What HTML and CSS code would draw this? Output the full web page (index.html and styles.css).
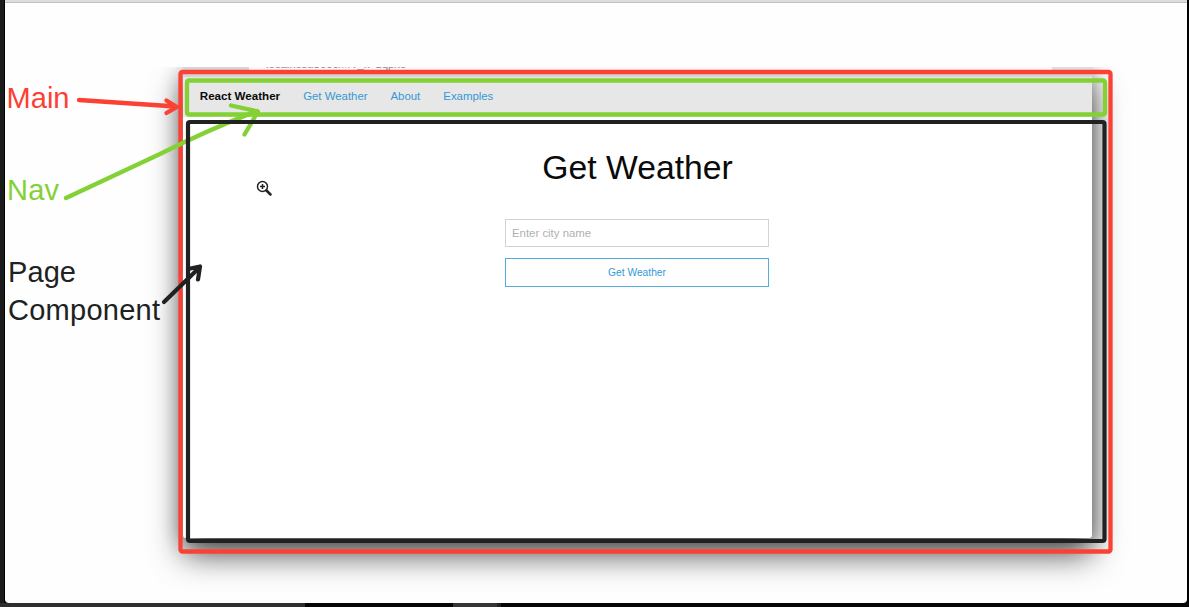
FILE: index.html
```html
<!DOCTYPE html>
<html lang="en">
<head>
<meta charset="utf-8">
<title>React Weather</title>
<link rel="stylesheet" href="styles.css">
</head>
<body>
<main class="slide">
  <div class="stage">
    <section class="browser">
      <div class="toolbar"><span class="tool-icons"></span><span class="url">localhost:3000/#/?_k=zqpxc</span><span class="tool-end"></span></div>
      <nav class="nav">
        <strong class="brand">React Weather</strong>
        <a class="link">Get Weather</a>
        <a class="link">About</a>
        <a class="link">Examples</a>
      </nav>
      <div class="page">
        <h1 class="title">Get Weather</h1>
        <form class="form">
          <input class="field" type="text" placeholder="Enter city name">
          <button class="button" type="button">Get Weather</button>
        </form>
      </div>
    </section>
  </div>
</main>
<footer class="strip"><span class="strip-dark"></span><span class="strip-thumb"></span></footer>
<svg class="notes" width="1189" height="607" viewBox="0 0 1189 607">
  <g class="stroke red">
    <rect x="180.5" y="72" width="930" height="479.5" rx="2"/>
    <path d="M79 100 176 106.5M166.500 100.500 177 107 166.500 113"/>
  </g>
  <g class="stroke green">
    <rect x="187" y="80.500" width="918" height="34" rx="2"/>
    <path d="M66 198 160 154Q210 129 257 111M231 105.500 258 111.500 244.500 134.500"/>
  </g>
  <g class="stroke black">
    <rect x="188" y="122" width="916.500" height="419" rx="2"/>
    <path d="M164 302 200 267M188 269 200 266.500 198 279.500"/>
  </g>
  <g class="labels">
    <text class="red-text" x="6.500" y="108" textLength="63">Main</text>
    <text class="green-text" x="7" y="200" textLength="52">Nav</text>
    <text x="8" y="282" textLength="68">Page</text>
    <text x="8" y="320" textLength="152">Component</text>
  </g>
  <g class="cursor">
    <circle class="lens" cx="262.500" cy="186.500" r="5"/>
    <path d="M262.500 184V189M260 186.500H265"/>
    <path class="handle" d="M266.500 190.500 270.500 194.500"/>
  </g>
</svg>
</body>
</html>
```
FILE: styles.css
```css
* { box-sizing: border-box; }
body {
  margin: 0;
  width: 1189px;
  height: 607px;
  overflow: hidden;
  padding: 0 2px 0 5px;
  background: linear-gradient(90deg, #1b1b1b 4px, #000 4px);
  font-family: "Liberation Sans", Arial, sans-serif;
}
.slide {
  height: 603px;
  padding-top: 67px;
  background: linear-gradient(#dcdcdc 2px, #c2c2c2 2px, #c2c2c2 3px, #fefefe 3px);
  border-radius: 0 0 4px 4px;
}
/* The stage trims the top edge of the window and its shadow. */
.stage { overflow: hidden; height: 536px; padding-left: 178px; }
.browser {
  display: flex;
  flex-direction: column;
  width: 909px;
  height: 471px;
  background: #fff;
  border-radius: 0 0 3px 3px;
  box-shadow: 0 17px 32px rgba(0, 0, 0, .68), 0 2px 20px rgba(0, 0, 0, .3);
}
.toolbar {
  display: flex;
  height: 10px;
  background: linear-gradient(#f7f7f7 3px, #d4d4d4 3px);
}
.tool-icons { width: 66px; height: 3px; background: #d5d5d5; margin-right: 17px; }
.url { margin-top: -10px; font-size: 11.500px; line-height: 14px; letter-spacing: -.1px; color: #888; }
.tool-end { width: 40px; height: 3px; margin-left: auto; background: #ddd; }
.nav {
  display: flex;
  align-items: baseline;
  gap: 23px;
  height: 40px;
  padding: 12px 17px 0 16.800px;
  background: #e7e7e7;
  font-size: 11.400px;
  line-height: 14px;
}
.brand { font-size: 11.600px; color: #0a0a0a; }
.link { color: #3399d6; }
.page { display: flex; flex-direction: column; align-items: center; padding: 30px 0 0; }
.title { margin: 0; font-size: 33.700px; font-weight: 400; line-height: 40px; color: #0a0a0a; }
.form { display: grid; gap: 11px; width: 264px; margin: 32px 1px 0 0; }
.field, .button {
  height: 28px;
  margin: 0;
  padding: 0 6px;
  border: 1px solid #d3d3d3;
  border-radius: 0;
  background: #fff;
  font-family: inherit;
  font-size: 11.400px;
}
.field::placeholder { color: #b0b0b0; opacity: 1; }
.button { height: 29px; border-color: #55addd; color: #3399d6; font-size: 10.250px; }
.strip { display: flex; height: 4px; margin: 0 -2px 0 -5px; background: linear-gradient(90deg, #2e2e30 305px, #050505 305px); }
.strip-dark { width: 453px; }
.strip-thumb { width: 48px; background: #363636; border-right: 4px solid #222; }
.notes { position: absolute; top: 0; left: 0; }
.stroke { fill: none; stroke-width: 4.300; stroke-linecap: round; stroke-linejoin: round; }
.red { stroke: #fb4134; }
.green { stroke: #83d135; }
.black { stroke: #202222; stroke-width: 4.200; }
.labels { font-size: 29px; fill: #202222; }
.red-text { fill: #fb4134; }
.green-text { fill: #83d135; }
.cursor { fill: none; stroke: #222; stroke-width: 1.500; }
.lens { fill: #fff; }
.handle { stroke-width: 2.500; stroke-linecap: round; }
```
